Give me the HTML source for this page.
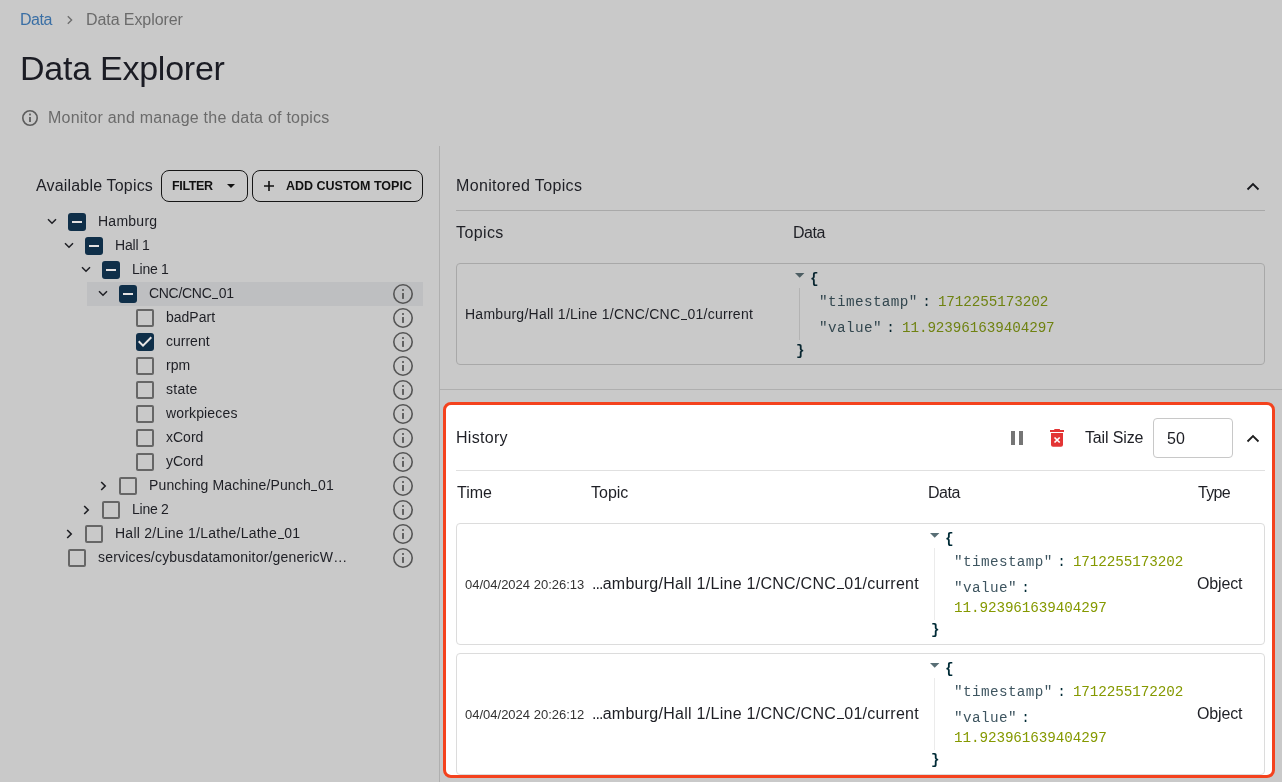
<!DOCTYPE html>
<html>
<head>
<meta charset="utf-8">
<style>
html,body{margin:0;padding:0;}
.wrap{position:absolute;left:0;top:0;width:1282px;height:782px;will-change:transform;}
body{width:1282px;height:782px;overflow:hidden;position:relative;background:#c9c9c9;font-family:"Liberation Sans",sans-serif;color:#1f2026;}
.a{position:absolute;white-space:nowrap;}
.t16{font-size:16px;line-height:16px;}
.t14{font-size:14px;line-height:14px;}
.mono{font-family:"Liberation Mono",monospace;font-size:14.3px;line-height:20px;}
.us{display:inline-block;width:6px;height:1px;background:currentColor;margin:0 0.6px;vertical-align:-1.15px;}
.us16{width:7px;height:1px;vertical-align:-0.46px;}
.k{letter-spacing:0.4px;}
.c{margin:0 7px 0 4.5px;}
.v{letter-spacing:-0.1px;}
svg{position:absolute;overflow:visible;}
.row-text{position:absolute;font-size:14px;line-height:14px;color:#1e1f25;white-space:nowrap;}
.cb{position:absolute;width:18px;height:18px;box-sizing:border-box;border-radius:3px;}
.cb.on{background:#0f2f49;}
.cb.off{border:2px solid #666;border-radius:2px;}
.cb.on .dash{position:absolute;left:4px;top:8px;width:10px;height:2px;background:#e4e1e1;}
.info{position:absolute;left:393px;width:20px;height:20px;}
.hl{position:absolute;left:87px;top:282px;width:336px;height:24px;background:#bebfc1;}
</style>
</head>
<body>
<div class="wrap">
<!-- breadcrumb -->
<div class="a t16" style="left:20px;top:12px;color:#3a6fa5;letter-spacing:-0.5px;">Data</div>
<svg style="left:66px;top:14px" width="8" height="12" viewBox="0 0 8 12"><path d="M1.8 2.2 L5.6 6 L1.8 9.8" fill="none" stroke="#6e6e6e" stroke-width="1.4"/></svg>
<div class="a t16" style="left:86px;top:12px;color:#6b6b6b;letter-spacing:-0.08px;">Data Explorer</div>

<!-- title -->
<div class="a" style="left:20px;top:51px;font-size:34px;line-height:34px;color:#1b1c24;letter-spacing:-0.25px;">Data Explorer</div>

<!-- subtitle -->
<svg style="left:22px;top:110px" width="16" height="16" viewBox="0 0 16 16"><circle cx="8" cy="8" r="7.2" fill="none" stroke="#5c5c5c" stroke-width="1.6"/><rect x="7.1" y="3.6" width="1.8" height="1.8" fill="#5c5c5c"/><rect x="7.1" y="7" width="1.8" height="5" fill="#5c5c5c"/></svg>
<div class="a t16" style="left:48px;top:110px;color:#6b6b6b;letter-spacing:0.23px;">Monitor and manage the data of topics</div>

<!-- separator -->
<div class="a" style="left:439px;top:146px;width:1px;height:636px;background:#afafaf;"></div>

<!-- available topics -->
<div class="a t16" style="left:36px;top:178px;color:#1e1f25;letter-spacing:0.18px;">Available Topics</div>
<div class="a" style="left:161px;top:170px;width:87px;height:32px;box-sizing:border-box;border:1px solid #161616;border-radius:8px;"></div>
<div class="a" style="left:172px;top:180px;font-size:12.5px;line-height:12.5px;font-weight:bold;color:#111;letter-spacing:-0.35px;">FILTER</div>
<svg style="left:227px;top:184px" width="8" height="4" viewBox="0 0 8 4"><path d="M0 0 L8 0 L4 4 Z" fill="#111"/></svg>
<div class="a" style="left:252px;top:170px;width:171px;height:32px;box-sizing:border-box;border:1px solid #161616;border-radius:8px;"></div>
<svg style="left:263px;top:180px" width="12" height="12" viewBox="0 0 12 12"><path d="M6 1 V11 M1 6 H11" fill="none" stroke="#111" stroke-width="1.6"/></svg>
<div class="a" style="left:286px;top:180px;font-size:12.5px;line-height:12.5px;font-weight:bold;color:#111;">ADD CUSTOM TOPIC</div>

<!-- tree -->
<div id="tree">
<div class="hl"></div>
<svg style="left:47px;top:218.4px" width="10" height="7" viewBox="0 0 10 7"><path d="M1 1.2 L5 5.2 L9 1.2" fill="none" stroke="#1e1f24" stroke-width="1.5"/></svg>
<div class="cb on" style="left:68px;top:213px"><div class="dash"></div></div>
<div class="row-text" style="left:98px;top:214px;letter-spacing:0.25px">Hamburg</div>
<svg style="left:64px;top:242.4px" width="10" height="7" viewBox="0 0 10 7"><path d="M1 1.2 L5 5.2 L9 1.2" fill="none" stroke="#1e1f24" stroke-width="1.5"/></svg>
<div class="cb on" style="left:85px;top:237px"><div class="dash"></div></div>
<div class="row-text" style="left:115px;top:238px;letter-spacing:-0.2px">Hall 1</div>
<svg style="left:81px;top:266.4px" width="10" height="7" viewBox="0 0 10 7"><path d="M1 1.2 L5 5.2 L9 1.2" fill="none" stroke="#1e1f24" stroke-width="1.5"/></svg>
<div class="cb on" style="left:102px;top:261px"><div class="dash"></div></div>
<div class="row-text" style="left:132px;top:262px;letter-spacing:-0.25px">Line 1</div>
<svg style="left:98px;top:290.4px" width="10" height="7" viewBox="0 0 10 7"><path d="M1 1.2 L5 5.2 L9 1.2" fill="none" stroke="#1e1f24" stroke-width="1.5"/></svg>
<div class="cb on" style="left:119px;top:285px"><div class="dash"></div></div>
<div class="row-text" style="left:149px;top:286px;letter-spacing:-0.3px">CNC/CNC<span class="us"></span>01</div>
<svg class="info" style="left:393px;top:284px" width="20" height="20" viewBox="0 0 20 20"><circle cx="10" cy="10" r="9.2" fill="none" stroke="#555" stroke-width="1.6"/><rect x="9.1" y="5.1" width="1.8" height="1.8" fill="#555"/><rect x="9.1" y="9" width="1.8" height="5.9" fill="#555"/></svg>
<div class="cb off" style="left:136px;top:309px"></div>
<div class="row-text" style="left:166px;top:310px;letter-spacing:0px">badPart</div>
<svg class="info" style="left:393px;top:308px" width="20" height="20" viewBox="0 0 20 20"><circle cx="10" cy="10" r="9.2" fill="none" stroke="#555" stroke-width="1.6"/><rect x="9.1" y="5.1" width="1.8" height="1.8" fill="#555"/><rect x="9.1" y="9" width="1.8" height="5.9" fill="#555"/></svg>
<div class="cb on" style="left:136px;top:333px"><svg style="left:0;top:0" width="18" height="18" viewBox="0 0 18 18"><path d="M7 14 L2 9 L3.41 7.59 L7 11.17 L14.59 3.58 L16 5 Z" fill="#e8e6e6"/></svg></div>
<div class="row-text" style="left:166px;top:334px;letter-spacing:0px">current</div>
<svg class="info" style="left:393px;top:332px" width="20" height="20" viewBox="0 0 20 20"><circle cx="10" cy="10" r="9.2" fill="none" stroke="#555" stroke-width="1.6"/><rect x="9.1" y="5.1" width="1.8" height="1.8" fill="#555"/><rect x="9.1" y="9" width="1.8" height="5.9" fill="#555"/></svg>
<div class="cb off" style="left:136px;top:357px"></div>
<div class="row-text" style="left:166px;top:358px;letter-spacing:0px">rpm</div>
<svg class="info" style="left:393px;top:356px" width="20" height="20" viewBox="0 0 20 20"><circle cx="10" cy="10" r="9.2" fill="none" stroke="#555" stroke-width="1.6"/><rect x="9.1" y="5.1" width="1.8" height="1.8" fill="#555"/><rect x="9.1" y="9" width="1.8" height="5.9" fill="#555"/></svg>
<div class="cb off" style="left:136px;top:381px"></div>
<div class="row-text" style="left:166px;top:382px;letter-spacing:0.25px">state</div>
<svg class="info" style="left:393px;top:380px" width="20" height="20" viewBox="0 0 20 20"><circle cx="10" cy="10" r="9.2" fill="none" stroke="#555" stroke-width="1.6"/><rect x="9.1" y="5.1" width="1.8" height="1.8" fill="#555"/><rect x="9.1" y="9" width="1.8" height="5.9" fill="#555"/></svg>
<div class="cb off" style="left:136px;top:405px"></div>
<div class="row-text" style="left:166px;top:406px;letter-spacing:0.15px">workpieces</div>
<svg class="info" style="left:393px;top:404px" width="20" height="20" viewBox="0 0 20 20"><circle cx="10" cy="10" r="9.2" fill="none" stroke="#555" stroke-width="1.6"/><rect x="9.1" y="5.1" width="1.8" height="1.8" fill="#555"/><rect x="9.1" y="9" width="1.8" height="5.9" fill="#555"/></svg>
<div class="cb off" style="left:136px;top:429px"></div>
<div class="row-text" style="left:166px;top:430px;letter-spacing:0px">xCord</div>
<svg class="info" style="left:393px;top:428px" width="20" height="20" viewBox="0 0 20 20"><circle cx="10" cy="10" r="9.2" fill="none" stroke="#555" stroke-width="1.6"/><rect x="9.1" y="5.1" width="1.8" height="1.8" fill="#555"/><rect x="9.1" y="9" width="1.8" height="5.9" fill="#555"/></svg>
<div class="cb off" style="left:136px;top:453px"></div>
<div class="row-text" style="left:166px;top:454px;letter-spacing:0px">yCord</div>
<svg class="info" style="left:393px;top:452px" width="20" height="20" viewBox="0 0 20 20"><circle cx="10" cy="10" r="9.2" fill="none" stroke="#555" stroke-width="1.6"/><rect x="9.1" y="5.1" width="1.8" height="1.8" fill="#555"/><rect x="9.1" y="9" width="1.8" height="5.9" fill="#555"/></svg>
<svg style="left:100px;top:481px" width="7" height="10" viewBox="0 0 7 10"><path d="M1.2 1 L5.2 5 L1.2 9" fill="none" stroke="#1e1f24" stroke-width="1.6"/></svg>
<div class="cb off" style="left:119px;top:477px"></div>
<div class="row-text" style="left:149px;top:478px;letter-spacing:0.14px">Punching Machine/Punch<span class="us"></span>01</div>
<svg class="info" style="left:393px;top:476px" width="20" height="20" viewBox="0 0 20 20"><circle cx="10" cy="10" r="9.2" fill="none" stroke="#555" stroke-width="1.6"/><rect x="9.1" y="5.1" width="1.8" height="1.8" fill="#555"/><rect x="9.1" y="9" width="1.8" height="5.9" fill="#555"/></svg>
<svg style="left:83px;top:505px" width="7" height="10" viewBox="0 0 7 10"><path d="M1.2 1 L5.2 5 L1.2 9" fill="none" stroke="#1e1f24" stroke-width="1.6"/></svg>
<div class="cb off" style="left:102px;top:501px"></div>
<div class="row-text" style="left:132px;top:502px;letter-spacing:-0.25px">Line 2</div>
<svg class="info" style="left:393px;top:500px" width="20" height="20" viewBox="0 0 20 20"><circle cx="10" cy="10" r="9.2" fill="none" stroke="#555" stroke-width="1.6"/><rect x="9.1" y="5.1" width="1.8" height="1.8" fill="#555"/><rect x="9.1" y="9" width="1.8" height="5.9" fill="#555"/></svg>
<svg style="left:66px;top:529px" width="7" height="10" viewBox="0 0 7 10"><path d="M1.2 1 L5.2 5 L1.2 9" fill="none" stroke="#1e1f24" stroke-width="1.6"/></svg>
<div class="cb off" style="left:85px;top:525px"></div>
<div class="row-text" style="left:115px;top:526px;letter-spacing:0.25px">Hall 2/Line 1/Lathe/Lathe<span class="us"></span>01</div>
<svg class="info" style="left:393px;top:524px" width="20" height="20" viewBox="0 0 20 20"><circle cx="10" cy="10" r="9.2" fill="none" stroke="#555" stroke-width="1.6"/><rect x="9.1" y="5.1" width="1.8" height="1.8" fill="#555"/><rect x="9.1" y="9" width="1.8" height="5.9" fill="#555"/></svg>
<div class="cb off" style="left:68px;top:549px"></div>
<div class="row-text" style="left:98px;top:550px;letter-spacing:0.19px">services/cybusdatamonitor/genericW…</div>
<svg class="info" style="left:393px;top:548px" width="20" height="20" viewBox="0 0 20 20"><circle cx="10" cy="10" r="9.2" fill="none" stroke="#555" stroke-width="1.6"/><rect x="9.1" y="5.1" width="1.8" height="1.8" fill="#555"/><rect x="9.1" y="9" width="1.8" height="5.9" fill="#555"/></svg>
</div><!--/tree-->

<!-- monitored topics -->
<div class="a t16" style="left:456px;top:178px;color:#1e1f25;letter-spacing:0.35px;">Monitored Topics</div>
<svg style="left:1246px;top:181.5px" width="14" height="9" viewBox="0 0 14 9"><path d="M1.5 7.5 L7 2 L12.5 7.5" fill="none" stroke="#17181d" stroke-width="1.8"/></svg>
<div class="a" style="left:456px;top:210px;width:809px;height:1px;background:#a9a9a9;"></div>
<div class="a t16" style="left:456px;top:225px;color:#1e1f25;letter-spacing:0.4px;">Topics</div>
<div class="a t16" style="left:793px;top:225px;color:#1e1f25;letter-spacing:-0.5px;">Data</div>
<div class="a" style="left:456px;top:263px;width:809px;height:102px;box-sizing:border-box;border:1px solid #a8a8a8;border-radius:4px;"></div>
<div class="a t14" style="left:465px;top:307px;color:#1e1f25;letter-spacing:0.26px;">Hamburg/Hall 1/Line 1/CNC/CNC<span class="us"></span>01/current</div>
<div id="json1">
<svg style="left:795px;top:272.5px" width="10" height="5" viewBox="0 0 10 5"><path d="M0 0 H9.4 L4.7 4.7 Z" fill="#4d5e63"/></svg>
<div class="a mono" style="left:810px;top:269px;color:#082630;font-weight:bold;">{</div>
<div class="a" style="left:799px;top:287.5px;width:1px;height:52px;background:#b3b3b3;"></div>
<div class="a mono" style="left:819px;top:292px;color:#33474f;"><span class="k">"timestamp"</span><span class="c" style="color:#082630">:</span><span class="v" style="color:#6f8211">1712255173202</span></div>
<div class="a mono" style="left:819px;top:318px;color:#33474f;"><span class="k">"value"</span><span class="c" style="color:#082630">:</span><span class="v" style="color:#6f8211">11.923961639404297</span></div>
<div class="a mono" style="left:796px;top:341px;color:#082630;font-weight:bold;">}</div>
</div><!--/json1-->
<div class="a" style="left:440px;top:389px;width:842px;height:1px;background:#afafaf;"></div>

<!-- history panel -->
<div class="a" style="left:443px;top:402px;width:832px;height:376px;box-sizing:border-box;border:3px solid #f4421d;border-radius:8px;background:#fff;overflow:hidden;">
<div style="position:absolute;left:-446px;top:-405px;width:1282px;height:782px;">
<div class="a t16" style="left:456px;top:430px;color:#1e1f25;letter-spacing:0.3px;">History</div>
<div class="a" style="left:1011px;top:431px;width:4px;height:14px;background:#757575;"></div>
<div class="a" style="left:1019px;top:431px;width:4px;height:14px;background:#757575;"></div>
<svg style="left:1049px;top:428px" width="16" height="20" viewBox="0 0 16 20"><path d="M5.6 1 H10.6 Q11 1 11 1.4 V2.1 H15 V3.9 H1 V2.1 H5.2 V1.4 Q5.2 1 5.6 1 Z" fill="#e33434"/><path d="M2 5.1 H14 V16.8 Q14 18.8 12 18.8 H4 Q2 18.8 2 16.8 Z" fill="#e33434"/><path d="M5.5 9.5 L10.7 14.5 M10.7 9.5 L5.5 14.5" stroke="#fff" stroke-width="1.7"/></svg>
<div class="a t16" style="left:1085px;top:430px;color:#1e1f25;letter-spacing:-0.15px;">Tail Size</div>
<div class="a" style="left:1153px;top:418px;width:80px;height:40px;box-sizing:border-box;border:1px solid #c8c8c8;border-radius:4px;"></div>
<div class="a t16" style="left:1167px;top:431.4px;color:#1e1f25;">50</div>
<svg style="left:1246px;top:433.5px" width="14" height="9" viewBox="0 0 14 9"><path d="M1.5 7.5 L7 2 L12.5 7.5" fill="none" stroke="#1f1f1f" stroke-width="1.8"/></svg>
<div class="a" style="left:456px;top:470px;width:809px;height:1px;background:#e0e0e0;"></div>
<div class="a t16" style="left:457px;top:485px;color:#1e1f25;letter-spacing:0px;">Time</div>
<div class="a t16" style="left:591px;top:485px;color:#1e1f25;letter-spacing:0px;">Topic</div>
<div class="a t16" style="left:928px;top:485px;color:#1e1f25;letter-spacing:-0.5px;">Data</div>
<div class="a t16" style="left:1198px;top:485px;color:#1e1f25;letter-spacing:-0.7px;">Type</div>
<div class="a" style="left:456px;top:523px;width:809px;height:122px;box-sizing:border-box;border:1px solid #dcdcdc;border-radius:4px;"></div>
<div class="a" style="left:465px;top:578px;font-size:13px;line-height:13px;color:#333;">04/04/2024 20:26:13</div>
<div class="a t16" style="left:592px;top:576px;color:#1e1f25;letter-spacing:0.27px;"><span style="letter-spacing:-0.9px">...</span>amburg/Hall 1/Line 1/CNC/CNC<span class="us us16"></span>01/current</div>
<div class="a t16" style="left:1197px;top:576px;color:#1e1f25;letter-spacing:-0.15px;">Object</div>
<svg style="left:930px;top:532.5px" width="10" height="5" viewBox="0 0 10 5"><path d="M0 0 H9.4 L4.7 4.7 Z" fill="#586e75"/></svg>
<div class="a mono" style="left:945px;top:529px;color:#002b36;font-weight:bold;">{</div>
<div class="a" style="left:934px;top:547.5px;width:1px;height:72px;background:#ebebeb;"></div>
<div class="a mono" style="left:954px;top:552px;color:#3e5560;"><span class="k">"timestamp"</span><span class="c" style="color:#002b36">:</span><span class="v" style="color:#859900">1712255173202</span></div>
<div class="a mono" style="left:954px;top:578px;color:#3e5560;"><span class="k">"value"</span><span class="c" style="color:#002b36">:</span><br><span class="v" style="color:#859900">11.923961639404297</span></div>
<div class="a mono" style="left:931px;top:620px;color:#002b36;font-weight:bold;">}</div>
<div class="a" style="left:456px;top:653px;width:809px;height:122px;box-sizing:border-box;border:1px solid #dcdcdc;border-radius:4px;"></div>
<div class="a" style="left:465px;top:708px;font-size:13px;line-height:13px;color:#333;">04/04/2024 20:26:12</div>
<div class="a t16" style="left:592px;top:706px;color:#1e1f25;letter-spacing:0.27px;"><span style="letter-spacing:-0.9px">...</span>amburg/Hall 1/Line 1/CNC/CNC<span class="us us16"></span>01/current</div>
<div class="a t16" style="left:1197px;top:706px;color:#1e1f25;letter-spacing:-0.15px;">Object</div>
<svg style="left:930px;top:662.5px" width="10" height="5" viewBox="0 0 10 5"><path d="M0 0 H9.4 L4.7 4.7 Z" fill="#586e75"/></svg>
<div class="a mono" style="left:945px;top:659px;color:#002b36;font-weight:bold;">{</div>
<div class="a" style="left:934px;top:677.5px;width:1px;height:72px;background:#ebebeb;"></div>
<div class="a mono" style="left:954px;top:682px;color:#3e5560;"><span class="k">"timestamp"</span><span class="c" style="color:#002b36">:</span><span class="v" style="color:#859900">1712255172202</span></div>
<div class="a mono" style="left:954px;top:708px;color:#3e5560;"><span class="k">"value"</span><span class="c" style="color:#002b36">:</span><br><span class="v" style="color:#859900">11.923961639404297</span></div>
<div class="a mono" style="left:931px;top:750px;color:#002b36;font-weight:bold;">}</div>
</div>
</div><!--/hist-->
</div><!--/wrap-->
</body>
</html>
